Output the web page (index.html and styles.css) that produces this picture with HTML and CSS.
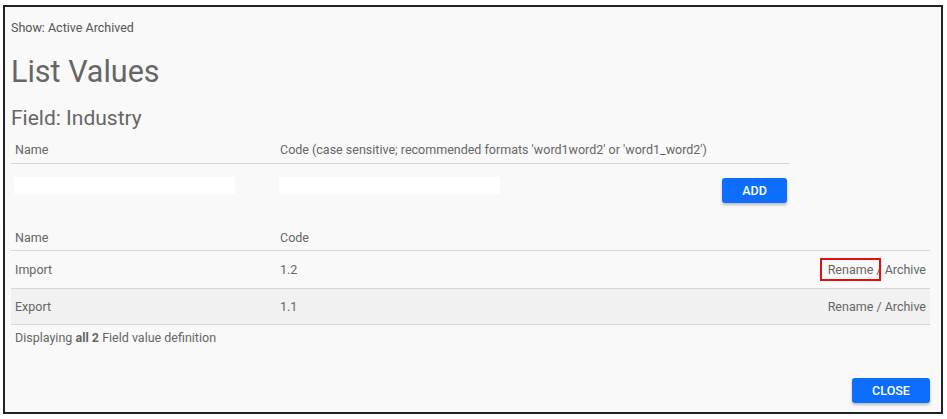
FILE: index.html
```html
<!DOCTYPE html>
<html>
<head>
<meta charset="utf-8">
<link rel="stylesheet" href="styles.css">
</head>
<body>
<div class="frame">
  <div class="show">Show: Active Archived</div>
  <h1 class="title">List Values</h1>
  <h2 class="subtitle">Field: Industry</h2>

  <div class="addform">
    <div class="form-head">
      <div class="c-name">Name</div>
      <div class="c-code">Code (case sensitive; recommended formats 'word1word2' or 'word1_word2')</div>
      <div class="c-act"></div>
    </div>
    <div class="form-row">
      <div class="c-name"><div class="input"></div></div>
      <div class="c-code"><div class="input"></div></div>
      <div class="c-act"><button class="btn btn-add">ADD</button></div>
    </div>
  </div>

  <div class="list">
    <div class="list-head">
      <div class="l-name">Name</div>
      <div class="l-code">Code</div>
      <div class="l-act"></div>
    </div>
    <div class="list-row">
      <div class="l-name">Import</div>
      <div class="l-code">1.2</div>
      <div class="l-act"><span class="marked">Rename</span> / Archive</div>
    </div>
    <div class="list-row alt">
      <div class="l-name">Export</div>
      <div class="l-code">1.1</div>
      <div class="l-act">Rename / Archive</div>
    </div>
  </div>
  <div class="count">Displaying <b>all 2</b> Field value definition</div>

  <div class="footer">
    <button class="btn btn-close">CLOSE</button>
  </div>
</div>
</body>
</html>
```

FILE: styles.css
```css
*, *::before, *::after {
  box-sizing: border-box;
}
html, body {
  margin: 0;
  padding: 0;
  background: #ffffff;
}
body {
  font-family: Roboto, "Liberation Sans", sans-serif;
  color: #666666;
  font-size: 12.5px;
}
.frame {
  margin: 5px 0 0 3px;
  width: 940px;
  height: 409px;
  border: 2px solid #222222;
  background: #f9f9f9;
  padding: 11px 11px 9px 6px;
  display: flex;
  flex-direction: column;
}
.show {
  height: 20px;
  line-height: 20px;
  font-size: 12.5px;
  color: #555;
}
.title {
  margin: 14px 0 0 0;
  font-size: 30.5px;
  line-height: 40px;
  font-weight: 400;
  color: #666;
}
.subtitle {
  margin: 12px 0 0 0;
  font-size: 21px;
  line-height: 28px;
  font-weight: 400;
  color: #666;
}
.addform {
  width: 779px;
  margin-top: 4px;
}
.form-head, .form-row {
  display: flex;
}
.form-head {
  height: 28px;
  line-height: 28px;
  border-bottom: 1px solid #d6d6d6;
}
.form-head > div {
  padding-left: 4px;
  white-space: nowrap;
}
.c-name { width: 265px; }
.c-code { flex: 1; }
.c-act { width: 74px; display: flex; justify-content: flex-end; }
.form-row .c-name, .form-row .c-code {
  padding: 13px 0 0 3px;
}
.input {
  width: 221px;
  height: 17px;
  background: #ffffff;
}
.btn {
  border: 0;
  border-radius: 3px;
  background: #0d6efd;
  color: #ffffff;
  font-family: Roboto, "Liberation Sans", sans-serif;
  font-size: 12.5px;
  font-weight: 500;
  padding: 0;
  box-shadow: 0 2px 3px rgba(0, 0, 0, 0.25);
}
.btn-add {
  margin: 14px 3px 0 0;
  width: 65px;
  height: 25px;
}
.list {
  margin-top: 21px;
}
.list-head, .list-row {
  display: flex;
  align-items: center;
  border-bottom: 1px solid #d6d6d6;
}
.list-head { height: 27px; }
.list-row { height: 38px; }
.list-row.alt { height: 36px; background: #f1f1f1; }
.l-name { width: 265px; padding-left: 4px; }
.l-code { width: 265px; padding-left: 4px; }
.l-act { flex: 1; text-align: right; padding-right: 4px; }
.marked {
  position: relative;
}
.marked::after {
  content: "";
  position: absolute;
  left: -8px;
  right: -8px;
  top: -4px;
  bottom: -4px;
  border: 2px solid #e01010;
}
.count {
  padding-left: 4px;
  height: 26px;
  line-height: 26px;
}
.count b {
  font-weight: 700;
}
.footer {
  margin-top: auto;
  display: flex;
  justify-content: flex-end;
}
.btn-close {
  width: 78px;
  height: 25px;
}
```
